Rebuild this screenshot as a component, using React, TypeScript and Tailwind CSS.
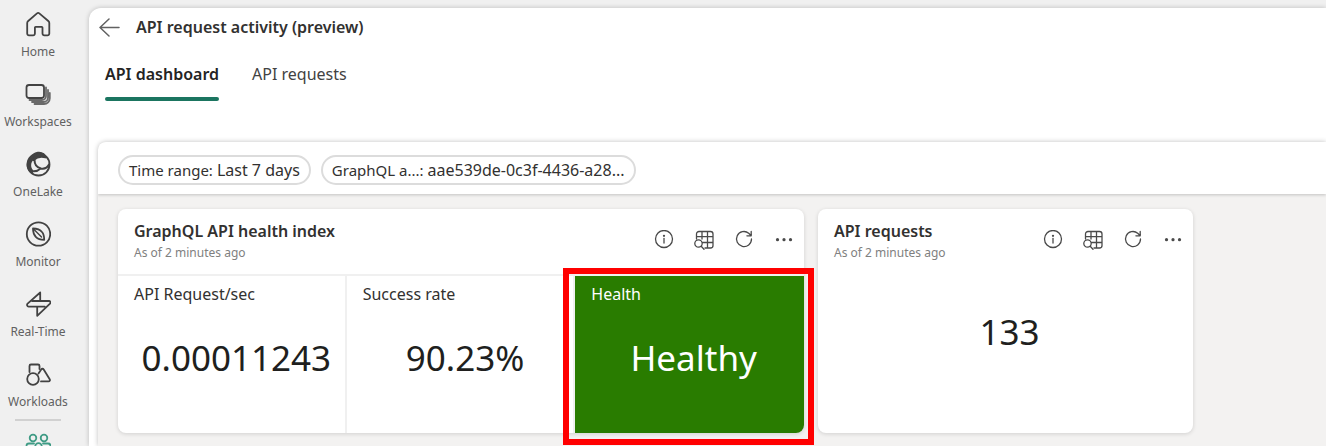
import type { ReactNode } from 'react';
import { useState } from 'react';

interface NavItem {
  label: string;
  icon: ReactNode;
}

const navItems: NavItem[] = [
  {
    label: 'Home',
    icon: (
      <path d="M12 2.4a1.800 1.800 0 0 1 2.300 0l9 7.600c.6.5 1 1.200 1 2v10.600a1.800 1.800 0 0 1-1.800 1.800h-3.200a1.800 1.800 0 0 1-1.800-1.800v-6a.8.8 0 0 0-.8-.8h-6a.8.8 0 0 0-.8.8v6a1.800 1.800 0 0 1-1.800 1.800H4a1.800 1.800 0 0 1-1.800-1.800V12c0-.8.4-1.500 1-2z" />
    ),
  },
  {
    label: 'Workspaces',
    icon: (
      <>
        <rect x="1.500" y="4" width="17.500" height="13" rx="2.500" />
        <path d="M4.500 19h12.500a4 4 0 0 0 4-4V6.500M7 21h11.500a4.500 4.500 0 0 0 4.500-4.500V9M9.500 23H19a5.800 5.800 0 0 0 5.800-5.800V12" strokeWidth="1.800" stroke="#6a6a6a" />
      </>
    ),
  },
  {
    label: 'OneLake',
    icon: (
      <>
        <circle cx="13.500" cy="13.500" r="11" />
        <path d="M8.500 4.500C10 1.500 15 .5 18.500 3c1 .8 1.500 2 2 3.500C16.500 5 12 6 8.500 9 7 7.500 7.500 6 8.500 4.500z" fill="currentColor" />
        <path d="M8 5C3 7 .8 12 2 16.500 3 20 5 22 7.500 23c.5-1.500.8-2.500.5-4C5.500 16.500 5.500 11.500 8.500 9z" fill="currentColor" stroke="none" />
        <path d="M9.500 9c0 4 2.500 7.500 6.500 8.500 3.500.6 6.500-1 8-4M15.500 17.500c-2 2-4.500 3-7.500 2.800" strokeWidth="2" />
      </>
    ),
  },
  {
    label: 'Monitor',
    icon: (
      <>
        <circle cx="13.500" cy="13" r="11.700" />
        <path d="M8 7.500c3.500 0 7 1 9 3.500 1.800 2 2.200 5 2.200 7.800-3.200 0-6.300-.8-8.400-3C8.800 13.700 8 10.800 8 7.500z" />
        <path d="M9 8.500l7.500 7.500" strokeWidth="1.400" />
      </>
    ),
  },
  {
    label: 'Real-Time',
    icon: (
      <path d="M15.200 1.500L2.600 12.700c-1 .9-.5 2.900 1 2.900h8.600v9.200L25 12.700c.9-1 .4-2.700-1-2.700h-8.800zM15.200 10h-8M12.200 15.600h7.500" />
    ),
  },
  {
    label: 'Workloads',
    icon: (
      <>
        <path d="M4.500 11V5a1.500 1.500 0 0 1 1.500-1.500h7A1.500 1.500 0 0 1 14.500 5v3" />
        <circle cx="8" cy="18" r="5.800" />
        <path d="M13.500 12.500l2.700-4c.7-1 1.800-1 2.500.1l6 9.600c.6 1 .1 2.200-1.200 2.200H16" />
      </>
    ),
  },
];

function NavIcon({ children }: { children: ReactNode }) {
  return (
    <svg
      viewBox="0 0 26 26"
      className="size-[26px]"
      fill="none"
      stroke="currentColor"
      strokeWidth="1.8"
      strokeLinecap="round"
      strokeLinejoin="round"
      aria-hidden="true"
    >
      {children}
    </svg>
  );
}

function Sidebar() {
  return (
    <nav className="flex w-[76px] shrink-0 flex-col items-center overflow-hidden pt-[11px]" aria-label="Main">
      {navItems.map((item) => (
        <button key={item.label} type="button" className="flex h-[70px] shrink-0 flex-col items-center gap-1.5 text-[#424242]">
          <NavIcon>{item.icon}</NavIcon>
          <span className="text-xs leading-[18px] text-[#616161]">{item.label}</span>
        </button>
      ))}
      <div className="-mt-3 h-0.5 w-[46px] shrink-0 bg-[#d1d1d1]" />
      <button type="button" className="mt-3 shrink-0 text-[#3f9b85]" aria-label="Current workspace">
        <NavIcon>
          <circle cx="8" cy="5" r="3.300" />
          <circle cx="19" cy="5" r="3.300" />
          <path d="M1.500 17v-4a2.500 2.500 0 0 1 2.500-2.500h5M25.500 17v-4a2.500 2.500 0 0 0-2.500-2.500h-5" />
          <circle cx="13.500" cy="13.500" r="3.300" />
        </NavIcon>
      </button>
    </nav>
  );
}

const tabs = ['API dashboard', 'API requests'];

function PageTabs() {
  const [selected, setSelected] = useState(tabs[0]);

  return (
    <div className="flex gap-[33px] pl-4" role="tablist">
      {tabs.map((tab) => (
        <button
          key={tab}
          type="button"
          role="tab"
          aria-selected={tab === selected}
          onClick={() => setSelected(tab)}
          className="flex flex-col gap-[11px] text-base leading-6"
        >
          <span className={tab === selected ? 'font-semibold text-[#242424]' : 'text-[#424242]'}>{tab}</span>
          {tab === selected && <span className="h-1 w-full rounded-full bg-[#1b7560]" />}
        </button>
      ))}
    </div>
  );
}

function ToolIcon({ children }: { children: ReactNode }) {
  return (
    <svg
      viewBox="0 0 20 20"
      className="size-5"
      fill="none"
      stroke="currentColor"
      strokeWidth="1.3"
      strokeLinecap="round"
      strokeLinejoin="round"
      aria-hidden="true"
    >
      {children}
    </svg>
  );
}

function TileActions() {
  return (
    <div className="flex items-start gap-5 pt-[21px] text-[#4a4a4a]">
      <button type="button" aria-label="Information">
        <ToolIcon>
          <circle cx="10" cy="9" r="8.500" />
          <path d="M10 8.500v4.500" />
          <circle cx="10" cy="5.800" r=".5" fill="currentColor" />
        </ToolIcon>
      </button>
      <button type="button" aria-label="Explore data">
        <ToolIcon>
          <path d="M2.500 9V4A2.500 2.500 0 0 1 5 1.500h11.500A2.500 2.500 0 0 1 19 4v11.500a2.500 2.500 0 0 1-2.500 2.500H11M2.500 6.700H19M8.500 12.500H19M8 1.500v7.500M13.500 1.500V18" />
          <circle cx="4.500" cy="13.500" r="3.700" />
          <path d="M7.200 16.200L10 19.200" />
        </ToolIcon>
      </button>
      <button type="button" aria-label="Refresh">
        <ToolIcon>
          <path d="M17.500 9a7.500 7.500 0 1 1-2.800-5.800L17 5.500M17.200 1.500v4.300h-4.300" />
        </ToolIcon>
      </button>
      <button type="button" aria-label="More options">
        <ToolIcon>
          <g fill="currentColor" stroke="none">
            <circle cx="3.500" cy="9.700" r="1.600" />
            <circle cx="10" cy="9.700" r="1.600" />
            <circle cx="16.500" cy="9.700" r="1.600" />
          </g>
        </ToolIcon>
      </button>
    </div>
  );
}

function Tile({ title, children }: { title: string; children: ReactNode }) {
  return (
    <section className="flex h-56 flex-col rounded-lg bg-white shadow-[0_1px_4px_rgba(0,0,0,0.14)]">
      <header className="flex h-[65px] shrink-0 justify-between pr-[10px] pl-4">
        <div className="pt-[10px]">
          <h2 className="text-base leading-6 font-semibold text-[#323130]">{title}</h2>
          <p className="text-xs leading-5 text-[#808080]">As of 2 minutes ago</p>
        </div>
        <TileActions />
      </header>
      {children}
    </section>
  );
}

interface StatProps {
  label: string;
  value: string;
}

function Stat({ label, value }: StatProps) {
  return (
    <div className="border-r-2 border-[#f0f0f0] pt-1.5">
      <h3 className="pl-4 text-base leading-6 text-[#323130]">{label}</h3>
      <p className="mt-7 pl-[10px] text-center text-[35px] leading-12 text-[#201f1e]">{value}</p>
    </div>
  );
}

function HealthStat({ label, value }: StatProps) {
  return (
    <div className="relative rounded-br-lg bg-[#297c00] pt-1.5 text-white">
      <h3 className="pl-4 text-base leading-6">{label}</h3>
      <p className="mt-7 pl-2 text-center text-[35px] leading-12">{value}</p>
      {/* callout around the health status */}
      <div className="pointer-events-none absolute -top-2 -right-[10px] -bottom-3 -left-3 border-6 border-[#ff0000]" />
    </div>
  );
}

const filters = [
  { name: 'Time range:', value: 'Last 7 days' },
  { name: 'GraphQL a...:', value: 'aae539de-0c3f-4436-a28...' },
];

function Dashboard() {
  return (
    <div className="ml-[9px] flex grow flex-col overflow-hidden rounded-tl-lg bg-[#f3f2f1] shadow-[0_0_5px_rgba(0,0,0,0.25)]">
      <div className="flex h-[52px] shrink-0 items-center gap-[10px] bg-white pt-1 pl-5 shadow-[0_1px_3px_rgba(0,0,0,0.2)]">
        {filters.map((filter) => (
          <button
            key={filter.name}
            type="button"
            className="flex h-[30px] items-center gap-1 rounded-full border-2 border-[#dcdcdc] bg-white px-[9px] leading-6 whitespace-nowrap text-[#323130]"
          >
            <span className="text-[15px]">{filter.name}</span>
            <span className="text-base">{filter.value}</span>
          </button>
        ))}
      </div>
      <div className="grid grid-cols-[686fr_375fr] gap-[14px] pt-[15px] pr-[133px] pl-5">
        <Tile title="GraphQL API health index">
          <div className="grid grow grid-cols-3 border-t-2 border-[#f0f0f0]">
            <Stat label="API Request/sec" value="0.00011243" />
            <Stat label="Success rate" value="90.23%" />
            <HealthStat label="Health" value="Healthy" />
          </div>
        </Tile>
        <Tile title="API requests">
          <p className="mt-[34px] pl-2 text-center text-[35px] leading-12 text-[#201f1e]">133</p>
        </Tile>
      </div>
    </div>
  );
}

export default function App() {
  return (
    <div className="flex h-screen overflow-hidden bg-[#f0f0f0] font-['Noto_Sans',sans-serif]">
      <Sidebar />
      <main className="mt-2 ml-[13px] flex grow flex-col overflow-hidden rounded-tl-xl bg-white shadow-[0_0_5px_rgba(0,0,0,0.22)]">
        <header className="flex items-center gap-4 pt-[7px] pl-[10px]">
          <button type="button" aria-label="Back" className="text-[#616161]">
            <svg viewBox="0 0 21 20" className="h-5 w-[21px]" fill="none" stroke="currentColor" strokeWidth="1.5" strokeLinecap="round" strokeLinejoin="round" aria-hidden="true">
              <path d="M20 10.500H1M10 2L1 10.500 10 19" />
            </svg>
          </button>
          <h1 className="text-base leading-6 font-semibold text-[#323130]">API request activity (preview)</h1>
        </header>
        <div className="h-[103px] shrink-0 pt-[23px]">
          <PageTabs />
        </div>
        <Dashboard />
      </main>
    </div>
  );
}
